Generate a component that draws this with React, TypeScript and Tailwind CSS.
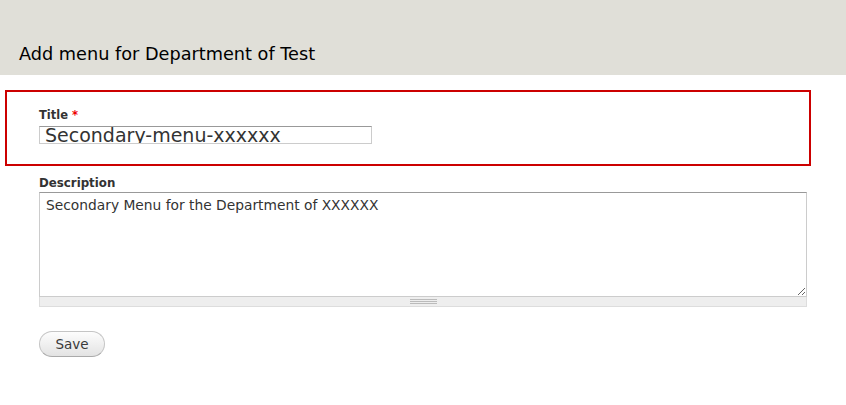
export default function App() {
  const font = { fontFamily: '"DejaVu Sans", "Lucida Grande", Verdana, sans-serif' };
  return (
    <div className="min-h-[405px] w-[846px] bg-white text-[#333]" style={font}>
      <div className="flex h-[75px] items-end bg-[#e0dfd8] px-[19px] pb-[9px]">
        <h1 className="text-[17.7px] font-normal leading-[24px] text-black">Add menu for Department of Test</h1>
      </div>
      <form className="px-[5px] pt-[15px]">
        <div className="w-[806px] border-2 border-[#cc0000] pl-[32px] pt-[16px] pb-[20px]">
          <label className="block text-[11.5px] font-bold leading-[14px] text-[#333]">
            Title <span className="text-[#e00]">*</span>
          </label>
          <input
            defaultValue="Secondary-menu-xxxxxx"
            className="mt-[4px] block h-[18px] w-[333px] border border-[#ccc] border-t-[#999] px-[5px] py-0 text-[19px] leading-[18px] text-[#333] outline-none"
          />
        </div>
        <div className="pl-[34px] pt-[10px]">
          <label className="block text-[11.8px] font-bold leading-[14px] text-[#333]">Description</label>
          <div className="mt-[2px] w-[768px]">
            <textarea
              defaultValue="Secondary Menu for the Department of XXXXXX"
              className="block h-[105px] w-full resize-y border border-[#ccc] border-t-[#999] border-b-[#ccc] px-[6px] py-[3px] text-[13.8px] leading-[18px] text-[#333] outline-none"
            />
            <div className="flex h-[10px] items-center justify-center border border-t-0 border-[#ddd] bg-[#eee]">
              <div className="flex w-[27px] flex-col gap-[1px]">
                <div className="h-px bg-[#bbb]" />
                <div className="h-px bg-[#bbb]" />
                <div className="h-px bg-[#bbb]" />
              </div>
            </div>
          </div>
          <button
            type="button"
            className="mt-[24px] h-[26px] w-[66px] rounded-full border border-[#c5c5c5] border-b-[#aaa] bg-gradient-to-b from-[#fdfdfd] to-[#e3e3e3] text-[13.5px] text-[#3a3a3a]"
          >
            Save
          </button>
        </div>
      </form>
    </div>
  );
}
